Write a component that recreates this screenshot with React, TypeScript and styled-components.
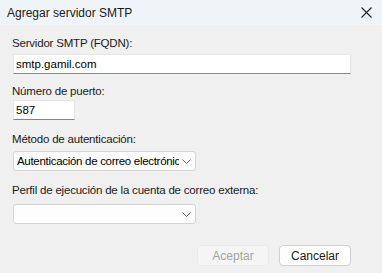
import * as React from 'react';
import styled, { createGlobalStyle } from 'styled-components';

const GlobalStyle = createGlobalStyle`
  html, body {
    margin: 0;
    padding: 0;
    background: #f0f0f0;
  }
  body {
    font-family: 'Liberation Sans', Arial, sans-serif;
    font-size: 11.5px;
    color: #000;
  }
`;

const Window = styled.div`
  width: 382px;
  height: 273px;
  display: flex;
  flex-direction: column;
  background: #f0f0f0;
  overflow: hidden;
`;

const TitleBar = styled.div`
  height: 25px;
  flex: none;
  display: flex;
  align-items: center;
  justify-content: space-between;
  padding: 0 7px 0 7px;
  background: #eff4f9;
`;

const Title = styled.span`
  font-size: 12px;
  line-height: 16px;
  color: #1a1a1a;
`;

const Body = styled.div`
  flex: 1;
  display: flex;
  flex-direction: column;
  align-items: flex-start;
  padding: 10px 31px 0 13px;
`;

const Label = styled.label<{ $top: number; $gap: number }>`
  display: block;
  margin: ${p => p.$top}px 0 ${p => p.$gap}px -1px;
  line-height: 16px;
  letter-spacing: -0.2px;
  color: #1a1a1a;
`;

const TextBox = styled.div<{ $width: number }>`
  box-sizing: border-box;
  width: ${p => p.$width}px;
  height: 20px;
  display: flex;
  align-items: center;
  padding: 0 2px;
  background: #fff;
  border: 1px solid #e6e6e6;
  border-bottom-color: #858585;
`;

const Select = styled.div`
  box-sizing: border-box;
  width: 183px;
  height: 20px;
  display: flex;
  align-items: center;
  justify-content: space-between;
  gap: 3px;
  padding: 0 4px 0 3px;
  background: #fdfdfd;
  border: 1px solid #d4d4d4;
  border-radius: 3px;
`;

const SelectText = styled.span`
  white-space: nowrap;
  overflow: hidden;
  text-overflow: clip;
  letter-spacing: -0.3px;
  flex: 1;
  min-width: 0;
`;

const Footer = styled.div`
  margin-top: auto;
  align-self: stretch;
  display: flex;
  justify-content: flex-end;
  gap: 10px;
  padding: 0 0 7px 0;
`;

const Button = styled.button<{ $disabled?: boolean }>`
  box-sizing: border-box;
  width: 72px;
  height: 21px;
  padding: 0;
  font-family: inherit;
  font-size: 12px;
  border-radius: 4px;
  border: 1px solid ${p => (p.$disabled ? '#ebebeb' : '#d0d0d0')};
  background: ${p => (p.$disabled ? '#f5f5f5' : '#fdfdfd')};
  color: ${p => (p.$disabled ? '#a3a3a3' : '#1a1a1a')};
`;

const Chevron = () => (
  <svg width="9" height="5" viewBox="0 0 9 5" fill="none" style={{ flex: 'none' }}>
    <path d="M0.5 0.5 L4.5 4.5 L8.5 0.5" stroke="#666" strokeWidth="1" />
  </svg>
);

const CloseIcon = () => (
  <svg width="11" height="11" viewBox="0 0 11 11" fill="none" style={{ marginRight: 3 }}>
    <path d="M0.5 0.5 L10.5 10.5 M10.5 0.5 L0.5 10.5" stroke="#222" strokeWidth="1.1" />
  </svg>
);

export default function App() {
  return (
    <Window>
      <GlobalStyle />
      <TitleBar>
        <Title>Agregar servidor SMTP</Title>
        <CloseIcon />
      </TitleBar>
      <Body>
        <Label $top={0} $gap={3}>Servidor SMTP (FQDN):</Label>
        <TextBox $width={338}>smtp.gamil.com</TextBox>
        <Label $top={9} $gap={1}>Número de puerto:</Label>
        <TextBox $width={62}>587</TextBox>
        <Label $top={11} $gap={4}>Método de autenticación:</Label>
        <Select>
          <SelectText>Autenticación de correo electrónico</SelectText>
          <Chevron />
        </Select>
        <Label $top={11} $gap={6}>Perfil de ejecución de la cuenta de correo externa:</Label>
        <Select>
          <SelectText />
          <Chevron />
        </Select>
        <Footer>
          <Button $disabled disabled>Aceptar</Button>
          <Button>Cancelar</Button>
        </Footer>
      </Body>
    </Window>
  );
}
